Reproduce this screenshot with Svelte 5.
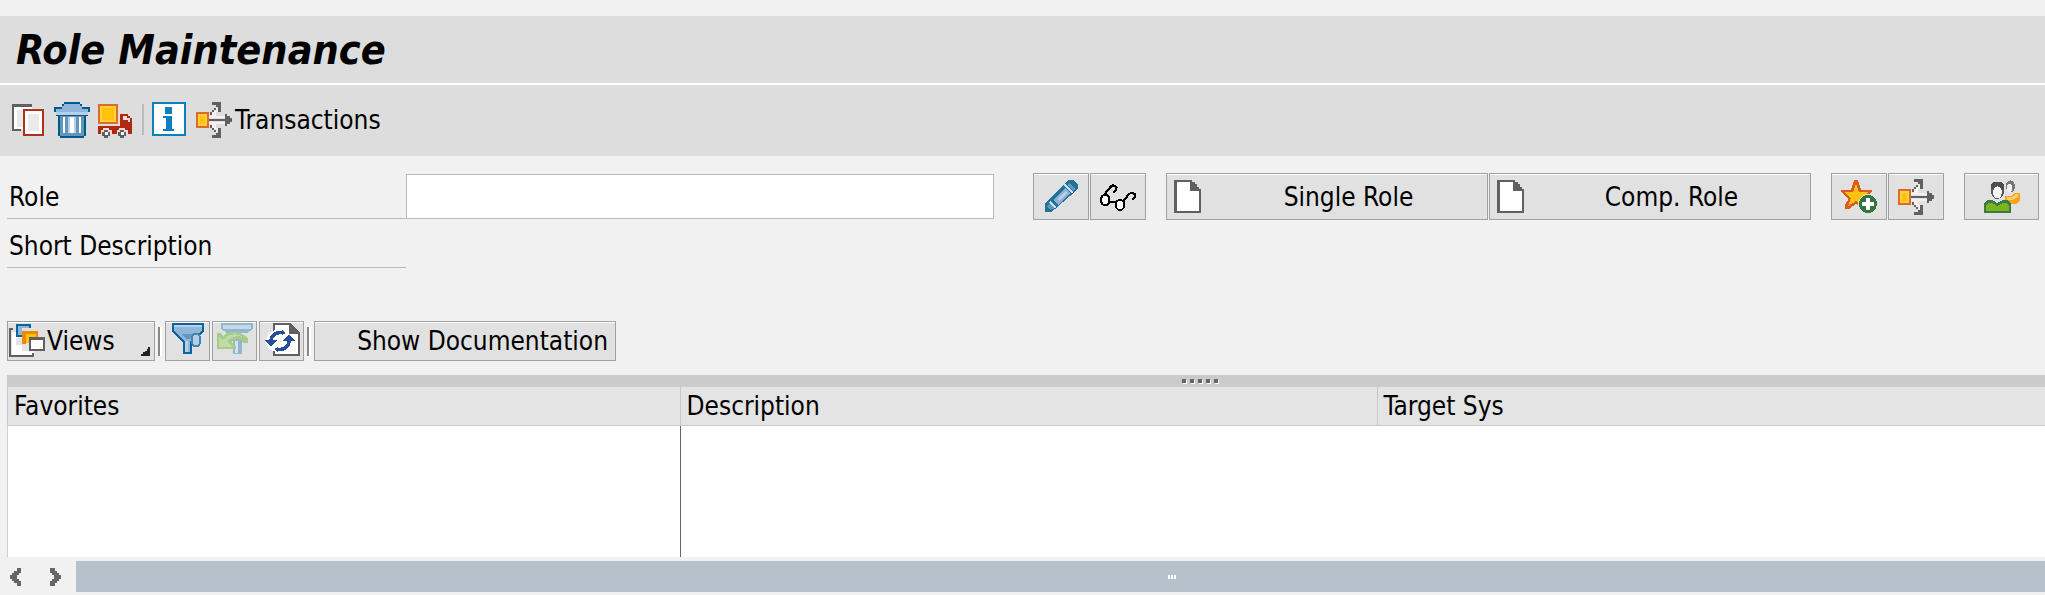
<script>
  let role = $state("");

  const columns = [
    { key: "favorites", label: "Favorites" },
    { key: "description", label: "Description" },
    { key: "target", label: "Target Sys" },
  ];
</script>

{#snippet flow()}
  <svg class="icon" viewBox="0 0 18 18" shape-rendering="crispEdges">
    <path fill="#f7eeee" d="M6 7h9v1H6zM6 10h9v1H6zM8 4h2v3H8zM8 11h2v3H8zM10 3h1v2h-1zM10 13h1v2h-1z" />
    <path fill="#5f6062" d="M6 8.500h9v1H6zM14.500 6h1v1h1.500v1h1v2h-1v1h-1.500v1h-1z" />
    <path fill="#5f6062" d="M8 0h4.500v5H11V2.500h-1V1.500H8zM9 3h1v1H9zM8 4h1v1H8zM7 5h1v1.500H7z" />
    <path fill="#5f6062" d="M8 18h4.500v-5H11v2.500h-1v1H8zM9 14h1v1H9zM8 13h1v1H8zM7 11.500h1V13H7z" />
    <path fill="#e06a28" d="M0 5h6.500v8H0z" />
    <path fill="#ffd23c" d="M1 6h4.500v6H1z" />
    <path fill="#ffc20e" d="M2 7h2.500v4H2z" />
  </svg>
{/snippet}

{#snippet page()}
  <svg class="page" viewBox="0 0 27 33" shape-rendering="crispEdges">
    <path fill="#5f6062" d="M0 0h18v2h3v2h2v3h2v2h2v24H0z" />
    <path fill="#fff" d="M3 2h13v9h9v20H3z" />
  </svg>
{/snippet}

<main>
  <header>
    <h1>Role Maintenance</h1>
  </header>

  <nav class="app-bar">
    <button class="flat" aria-label="Copy role">
      <svg class="icon" viewBox="0 0 18 18" shape-rendering="crispEdges">
        <path fill="#5f6062" d="M1 1h10v1.500H2v11h3.500V14.500H1z" />
        <path fill="#fff" d="M2 2.500h9v1H6.500v10H2z" />
        <path fill="#eaeaec" d="M3.500 4h3v8.500h-3z" />
        <path fill="#b0301c" d="M6.500 3.500H17V17H6.500z" />
        <path fill="#fff" d="M7.500 4.500H16V16H7.500z" />
        <path fill="#eaeaec" d="M9 6h5.500v8.500H9z" />
      </svg>
    </button>
    <button class="flat" aria-label="Delete role">
      <svg class="icon" viewBox="0 0 18 18" shape-rendering="crispEdges">
        <path fill="#00598c" d="M5 0h8v1h1v1.500h4V5h-1v2h-1v10h-1v1H3v-1H2V7H1V5H0V2.500h4V1h1z" />
        <path fill="#8fb5da" d="M5 1h8v1h1v1.500h3V5H1V3.500h3V2h1z" />
        <path fill="#b9cee6" d="M1 5h16v1.500H1z" />
        <path fill="#6197be" d="M3 7h12v10H3z" />
        <path fill="#fff" d="M4.500 7.500h1v8h-1zM8 7.500h2v8H8zM12.500 7.500h1v8h-1z" />
        <path fill="#b9cee6" d="M7 7.500h1v8H7zM10 7.500h1v8h-1z" />
      </svg>
    </button>
    <button class="flat" aria-label="Transport role">
      <svg class="icon" viewBox="1 0 18 18" shape-rendering="crispEdges">
        <path fill="#e06a28" d="M1 1h10v10H1z" />
        <path fill="#ffd23c" d="M2 2h8v8H2z" />
        <path fill="#ffc20e" d="M3 3h6v6H3z" />
        <path fill="#b0280f" d="M12 6h4v1h1v1h1v8h-2v-2H11v2H8v-2H3v2H1v-4h11z" />
        <path fill="#f4d9dc" d="M13.500 7h2v1h1.500v2h-1v-1h-2.500zM3.500 13h3v1h1v2H2.500v-2h1zM11.500 13h3v1h1v2h-5v-2h1z" />
        <path fill="#5f6062" d="M4 14h2v1h1v2H6v1H4v-1H3v-2h1zM12 14h2v1h1v2h-1v1h-2v-1h-1v-2h1z" />
        <path fill="#fff" d="M4.500 15h1.500v1.500H4.500zM12.500 15H14v1.500h-1.500z" />
      </svg>
    </button>
    <span class="bar-sep"></span>
    <button class="flat" aria-label="Information">
      <svg class="icon" viewBox="0 0 18 18" shape-rendering="crispEdges">
        <path fill="#0a80c2" d="M0 0h17v17H0z" />
        <path fill="#fff" d="M1 1h15v15H1z" />
        <path fill="#0a80c2" d="M6.500 2.500H10V6H6.500zM5.500 7H10v6.500h1v1H5.500v-1h1.500V8H5.500z" />
      </svg>
    </button>
    <button class="flat">
      {@render flow()}<span>Transactions</span>
    </button>
  </nav>

  <form class="role-form" onsubmit={(e) => e.preventDefault()}>
    <div class="row">
      <label for="role">Role</label>
      <input id="role" type="text" bind:value={role} />
      <div class="buttons">
        <div class="pair">
          <button class="btn square" type="button" aria-label="Change">
            <svg class="icon" viewBox="0 0 18 18" shape-rendering="crispEdges">
              <path fill="#217199" d="M1 16.500V12L11.500 1.500 13 .5h2L17.500 3v2L6 15l-2 1.500z" />
              <path fill="#8cafd8" d="M5 10.500L11 4.500l2.500 2.500-6 6z" />
              <path fill="#b9cee6" d="M7 10l4-4 1 1-4 4z" />
              <path fill="#6197be" d="M2 13.500L3.500 12l2.500 2.500L3.500 15.500zM13 2l3 3-1 1-3-3z" />
              <path fill="none" stroke="#c9e0e8" d="M3.500 11.500l3 3M10.500 2.500l4.500 4.500" />
            </svg>
          </button>
          <button class="btn square" type="button" aria-label="Display">
            <svg class="icon" viewBox="0 0 18 18" shape-rendering="crispEdges">
              <g fill="none" stroke="#000" stroke-width="1.1">
                <ellipse cx="2.600" cy="10.500" rx="2.100" ry="2.700" fill="#fff" />
                <ellipse cx="10" cy="13" rx="2.100" ry="2.500" fill="#fff" />
                <path d="M2 8L5.500 3.700Q7 2.500 8.300 4.200L8 5.700 6.700 6.700M4.700 11.300H8M12 11.500V10.500L14 8.200Q15.500 6 17.500 7.700V9L16.300 10.300" />
              </g>
            </svg>
          </button>
        </div>
        <div class="pair">
          <button class="btn create" type="button">{@render page()}<span>Single Role</span></button>
          <button class="btn create" type="button">{@render page()}<span>Comp. Role</span></button>
        </div>
        <div class="pair">
          <button class="btn square" type="button" aria-label="Add to favorites">
            <svg class="icon" viewBox="0 0 18 18" shape-rendering="crispEdges">
              <path fill="#dc5a1e" d="M6.500 .5h2L10 5.500h5.500v1L11.500 10l1 5-5-2.500L4 15H2v-2L3.700 10 0 6.500v-1h5z" />
              <path fill="#ffc20e" d="M7.500 2.500L9 6.500h5L10.500 9.500l1 4-4-2.500L3.500 13.500 5 9.500 1.700 6.500H6z" />
              <circle cx="13.500" cy="12.500" r="5" fill="#d5e8d0" />
              <circle cx="13.500" cy="12.500" r="4.500" fill="#357244" />
              <path fill="#fff" d="M12.700 9.500h1.600v2.200h2.200v1.600h-2.200v2.200h-1.600v-2.200h-2.200v-1.600h2.200z" />
            </svg>
          </button>
          <button class="btn square" type="button" aria-label="Where used">{@render flow()}</button>
        </div>
        <button class="btn users" type="button" aria-label="Assign users">
          <svg class="icon" viewBox="0 0 18 18" shape-rendering="crispEdges">
            <ellipse cx="13.200" cy="3.700" rx="2.300" ry="3" fill="#77787a" />
            <ellipse cx="12.700" cy="4.500" rx="1.400" ry="2" fill="#f0f0f0" />
            <path fill="#f7a51c" d="M10.500 8.500h3L15 7h3v4l-2 1.500h-3L10.500 10.500z" />
            <path fill="#ffcf70" d="M11.500 9h2.500l1.500-1.500H17V9l-3 1.500h-2.500z" />
            <path fill="#3b7a45" d="M1.500 10.500H4L6.700 12 9.500 10.500H12l1.500 2V17H0v-4.500z" />
            <path fill="#7ab51d" d="M2 12h2l2.700 1.500L9.500 12h2l1 1.500V16H1v-2.500z" />
            <ellipse cx="6.700" cy="5.700" rx="3.300" ry="4.300" fill="#58595b" />
            <path fill="#4d4e50" d="M4.500 1.500h4.500l1 1.500v2H3.500V3z" />
            <ellipse cx="6.700" cy="6.700" rx="2.200" ry="3" fill="#f4f4f6" />
          </svg>
        </button>
      </div>
    </div>
    <div class="row">
      <span class="caption">Short Description</span>
    </div>
  </form>

  <div class="tool-bar">
    <button class="btn views">
      <svg class="views-icon" viewBox="0 0 36 34" shape-rendering="crispEdges">
        <path fill="#fff" d="M3 8h22v23H3z" />
        <path fill="#5f6062" d="M0 4h4v2H2v25h21v-2h2v4H0z" />
        <path fill="#e4e4e4" d="M7 14h18v13H13v-6H7z" />
        <path fill="#0a639b" d="M7 0h15v4h-2V2H9v9h4v2H7z" />
        <path fill="#8fb5da" d="M9 2h11v2h-7v7H9z" />
        <path fill="#ef8a00" d="M13 7h16v6h-2v-3H17v10h-4z" />
        <path fill="#ffc20e" d="M17 10h10v3h-7v6h-3z" />
        <path fill="#5f6062" d="M20 13h16v14H20z" />
        <path fill="#fff" d="M22 16h12v9H22z" />
      </svg>
      <span>Views</span>
      <svg class="corner" viewBox="0 0 9 9" shape-rendering="crispEdges">
        <path fill="#222" d="M9 0v9H0V7h2V5h2V4h2V2h1V0z" />
      </svg>
    </button>
    <span class="sep"></span>
    <button class="btn tool" aria-label="Filter">
      <svg class="icon" viewBox="-1 0 18 18" shape-rendering="crispEdges">
        <path fill="#0a639b" d="M0 0h16v4.500L10 9.500v6H5.500v-6L0 4.500z" />
        <path fill="#8fb5da" d="M1 1h14v3L9 9v5.500H6.500V9L1 4z" />
        <path fill="#b9cee6" d="M1 1h14v1H1zM6.500 9H8v5.500H6.500z" />
        <path fill="#6197be" d="M5 5.500h6L9 8H7z" />
        <ellipse cx="12" cy="8.500" rx="2.200" ry="3.300" fill="#b9cee6" stroke="#3f86b0" />
      </svg>
    </button>
    <button class="btn tool" aria-label="Delete filter">
      <svg class="icon faded" viewBox="0 0 18 18" shape-rendering="crispEdges">
        <path fill="#5a9cc4" d="M2 0h16v3l-3 2H5L2 3z" />
        <path fill="#bcd2ea" d="M3 1h14v2H3z" />
        <path fill="#5a9cc4" d="M8 8h4.500v7.500H8z" />
        <path fill="#d5e2f0" d="M9 9h1.500v6H9z" />
        <path fill="#82bd50" d="M0 5h1.500L3 6.500C5 4 12 3 15.500 8v2h-2C12 7.500 9 7.500 7 9.500l2.500 2.500v1H0z" />
        <path fill="#aed888" d="M1 7l2 1.500C6 5 10 5 13 7 10 6 7 7 5 9.500L7.500 12H1z" />
      </svg>
    </button>
    <button class="btn tool" aria-label="Refresh">
      <svg class="icon" viewBox="0 0 18 18" shape-rendering="crispEdges">
        <path fill="#5f6062" d="M4.500 0h9L18 5v11.500H4.500z" />
        <path fill="#fff" d="M5.500 1h7v4.500H17v10H5.500z" />
        <ellipse cx="7" cy="9" rx="6" ry="5.500" fill="#fff" />
        <path fill="none" stroke="#274e9c" stroke-width="1.800" d="M3.500 9.500C3.500 6 6 4.500 9.500 4.700M12.500 8.500C12.500 12 10 13.500 6.500 13.300" />
        <path fill="#274e9c" d="M0 8.500h6.500L3.500 12zM9.500 9h6L12.500 5.500zM9 3.500l2 1.500-2 1zM7 14.500L5 13l2-1z" />
      </svg>
    </button>
    <span class="sep"></span>
    <button class="btn docs">Show Documentation</button>
  </div>

  <div class="splitter">
    {#each Array(5) as _}<i></i>{/each}
  </div>

  <table>
    <thead>
      <tr>
        {#each columns as col (col.key)}<th class={col.key}>{col.label}</th>{/each}
      </tr>
    </thead>
    <tbody>
      <tr>
        {#each columns as col (col.key)}<td class={col.key}></td>{/each}
      </tr>
    </tbody>
  </table>

  <div class="scroll-bar">
    <button class="flat" aria-label="Scroll left">
      <svg class="arrow" viewBox="0 0 11 18" shape-rendering="crispEdges">
        <path fill="#666" d="M11 0v5H9v2H7v4h2v2h2v5H7v-3H4v-2H2v-2H0V7h2V5h2V3h3V0z" />
      </svg>
    </button>
    <button class="flat" aria-label="Scroll right">
      <svg class="arrow" viewBox="0 0 11 18" shape-rendering="crispEdges">
        <path fill="#666" d="M0 0v5h2v2h2v4H2v2H0v5h5v-3h2v-2h2v-2h2V7H9V5H7V3H5V0z" />
      </svg>
    </button>
    <div class="thumb"><i></i><i></i><i></i></div>
  </div>
</main>

<style>
  :global(body) { background: #f1f1f1; }
  main {
    padding-top: 16px; overflow: hidden; color: #000;
    font-family: "DejaVu Sans Condensed", "DejaVu Sans", sans-serif;
    font-size: 26px; line-height: 32px;
  }
  button, input { font: inherit; color: inherit; margin: 0; padding: 0; border: 0; box-sizing: border-box; }
  svg { display: block; flex: none; }
  .icon { width: 36px; height: 36px; }

  header { background: #ddd; border-bottom: 2px solid #fff; padding: 10px 16px 9px; }
  h1 { margin: 0; font-size: 41px; line-height: 48px; font-weight: bold; font-style: italic; }

  .app-bar {
    background: #ddd; display: flex; align-items: center; gap: 8px;
    height: 71px; padding: 0 10px 2px; box-sizing: border-box;
  }
  .flat { background: none; display: flex; align-items: center; gap: 3px; }
  .bar-sep { width: 2px; height: 31px; background: #bbb; }

  .role-form { padding: 17px 6px 0 7px; }
  .row { display: flex; align-items: flex-start; }
  .row label, .caption {
    display: flex; align-items: flex-end; width: 399px; flex: none; box-sizing: border-box;
    padding: 0 2px 5px; border-bottom: 1px solid #bbb;
  }
  .row label { height: 46px; }
  .caption { height: 48px; }
  .row input { width: 588px; height: 45px; margin-top: 1px; border: 1px solid #bbb; background: #fff; padding: 0 6px; border-radius: 0; }
  .buttons { flex: 1; display: flex; justify-content: space-between; margin-left: 39px; }
  .pair { display: flex; gap: 1px; }
  .btn {
    background: #e1e1e1; border: 1px solid #a0a0a0; box-shadow: inset 0 1px #fff;
    display: flex; align-items: center; justify-content: center; height: 47px;
  }
  .square { width: 56px; }
  .users { width: 75px; }
  .create { width: 322px; padding: 0 7px; }
  .create span { flex: 1; padding-left: 16px; }
  .page { width: 27px; height: 33px; }

  .tool-bar { display: flex; align-items: center; gap: 2px; padding: 53px 7px 14px; }
  .tool-bar .btn { height: 40px; }
  .tool { width: 45px; }
  .tool-bar .views { width: 148px; padding: 0 4px 0 1px; justify-content: flex-start; gap: 2px; }
  .views-icon { width: 36px; height: 34px; }
  .corner { width: 9px; height: 9px; margin: 20px 0 0 auto; }
  .docs { width: 302px; justify-content: flex-end; padding-right: 7px; }
  .sep { width: 2px; height: 29px; background: #888; border-right: 2px solid #fff; margin: 0 1px; }
  .faded { opacity: 0.6; }

  .splitter {
    height: 12px; margin-left: 7px; padding-left: 17%; background: #cbcbcb;
    display: flex; align-items: center; justify-content: center; gap: 4px;
  }
  .splitter i { width: 4px; height: 4px; background: #666; box-shadow: 1px 1px #fff; }

  table { width: calc(100% - 7px); margin-left: 7px; border-collapse: separate; border-spacing: 0; table-layout: fixed; }
  th {
    height: 39px; box-sizing: border-box; background: #e4e4e4; padding: 0 6px;
    border-bottom: 1px solid #c8c8c8; border-left: 1px solid #c8c8c8;
    text-align: left; font-weight: normal;
  }
  td { height: 131px; padding: 0; background: #fff; }
  td.favorites { border-left: 1px solid #d0d0d0; }
  td.description { border-left: 1px solid #666; }
  th.favorites { width: 33%; }
  th.description { width: 34.2%; }

  .scroll-bar { display: flex; align-items: center; gap: 29px; padding: 4px 0 3px 10px; }
  .thumb {
    flex: 1; margin-left: -14px; padding-left: 11%; height: 31px; background: #b7c1cb;
    display: flex; align-items: center; justify-content: center; gap: 1px;
  }
  .thumb i { width: 2px; height: 4px; background: #fff; }
  .arrow { width: 11px; height: 18px; }
</style>
